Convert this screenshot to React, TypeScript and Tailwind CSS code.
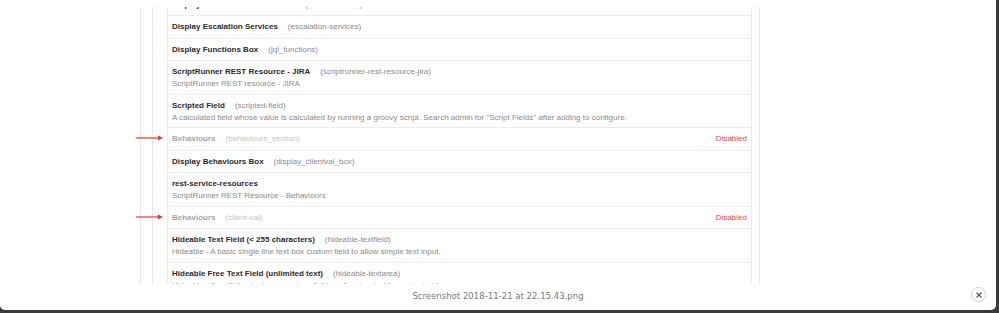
import React from "react";

type Row = {
  title: string;
  keyName: string;
  desc?: string;
  disabled?: boolean;
  arrow?: boolean;
};

const rows: Row[] = [
  { title: "Display Escalation Services Box", keyName: "(escalation-box)" },
  { title: "Display Escalation Services", keyName: "(escalation-services)" },
  { title: "Display Functions Box", keyName: "(jql_functions)" },
  {
    title: "ScriptRunner REST Resource - JIRA",
    keyName: "(scriptrunner-rest-resource-jira)",
    desc: "ScriptRunner REST resource - JIRA",
  },
  {
    title: "Scripted Field",
    keyName: "(scripted-field)",
    desc: 'A calculated field whose value is calculated by running a groovy script. Search admin for "Script Fields" after adding to configure.',
  },
  { title: "Behaviours", keyName: "(behaviours_section)", disabled: true, arrow: true },
  { title: "Display Behaviours Box", keyName: "(display_clientval_box)" },
  {
    title: "rest-service-resources",
    keyName: "",
    desc: "ScriptRunner REST Resource - Behaviours",
  },
  { title: "Behaviours", keyName: "(client-val)", disabled: true, arrow: true },
  {
    title: "Hideable Text Field (< 255 characters)",
    keyName: "(hideable-textfield)",
    desc: "Hideable - A basic single line text box custom field to allow simple text input.",
  },
  {
    title: "Hideable Free Text Field (unlimited text)",
    keyName: "(hideable-textarea)",
    desc: "Hideable - A multi-line text area custom field to allow input of longer text strings.",
  },
];

function Arrow() {
  return (
    <svg
      className="absolute left-[-32px] top-[7px]"
      width="28"
      height="6"
      viewBox="0 0 28 6"
    >
      <line x1="0" y1="3" x2="23" y2="3" stroke="#e8382f" strokeWidth="1.2" />
      <polygon points="22,0.5 27,3 22,5.5" fill="#e8382f" />
    </svg>
  );
}

export default function App() {
  return (
    <div className="w-[999px] h-[313px] bg-[#3a3a3a] overflow-hidden">
      <div
        className="w-[996px] h-[310px] bg-white rounded-b-[5px] flex flex-col overflow-hidden"
        style={{ fontFamily: '"Liberation Sans", Arial, sans-serif' }}
      >
        <div className="mt-[7px] h-[277px] overflow-hidden flex">
          <div className="w-[140px] shrink-0" />
          <div className="w-[1px] bg-[#e6e6e6] shrink-0" />
          <div className="w-[11px] shrink-0" />
          <div className="w-[1px] bg-[#e6e6e6] shrink-0" />
          <div className="w-[14px] shrink-0" />
          <div className="w-[585px] shrink-0 mt-[-13.5px] border-l border-r border-[#ececec]">
            {rows.map((r, i) => (
              <div
                key={i}
                className="relative border-b border-[#ececec] pl-[4px] pr-[4px] pt-[5px] pb-[4.5px] text-[8px]"
              >
                {r.arrow && <Arrow />}
                <div className="flex items-center leading-[12px]">
                  <span
                    className={
                      r.disabled
                        ? "font-bold text-[#a8a8a8]"
                        : "font-bold text-[#2b2b2b]"
                    }
                  >
                    {r.title}
                  </span>
                  {r.keyName && (
                    <span
                      className={
                        r.disabled
                          ? "ml-[10px] text-[#c4c4c4]"
                          : "ml-[10px] text-[#8a8a8a]"
                      }
                    >
                      {r.keyName}
                    </span>
                  )}
                  {r.disabled && (
                    <span className="ml-auto text-[#f2434b]">Disabled</span>
                  )}
                </div>
                {r.desc && (
                  <div className="text-[#8a8a8a] leading-[11px]">{r.desc}</div>
                )}
              </div>
            ))}
          </div>
          <div className="w-[7px] shrink-0" />
          <div className="w-[1px] bg-[#e6e6e6] shrink-0" />
        </div>
        <div className="flex-1 relative flex items-center justify-center">
          <span
            className="text-[9.5px] text-[#7a7a7a] mb-[1px]"
            style={{ fontFamily: '"DejaVu Sans Condensed", "Liberation Sans Narrow", sans-serif' }}
          >
            Screenshot 2018-11-21 at 22.15.43.png
          </span>
          <div className="absolute right-[10px] top-[3px] w-[15px] h-[15px] rounded-full border border-[#cfcfcf] flex items-center justify-center">
            <svg width="6" height="6" viewBox="0 0 6 6">
              <path d="M0.5 0.5 L5.5 5.5 M5.5 0.5 L0.5 5.5" stroke="#555" strokeWidth="1.2" />
            </svg>
          </div>
        </div>
      </div>
    </div>
  );
}
